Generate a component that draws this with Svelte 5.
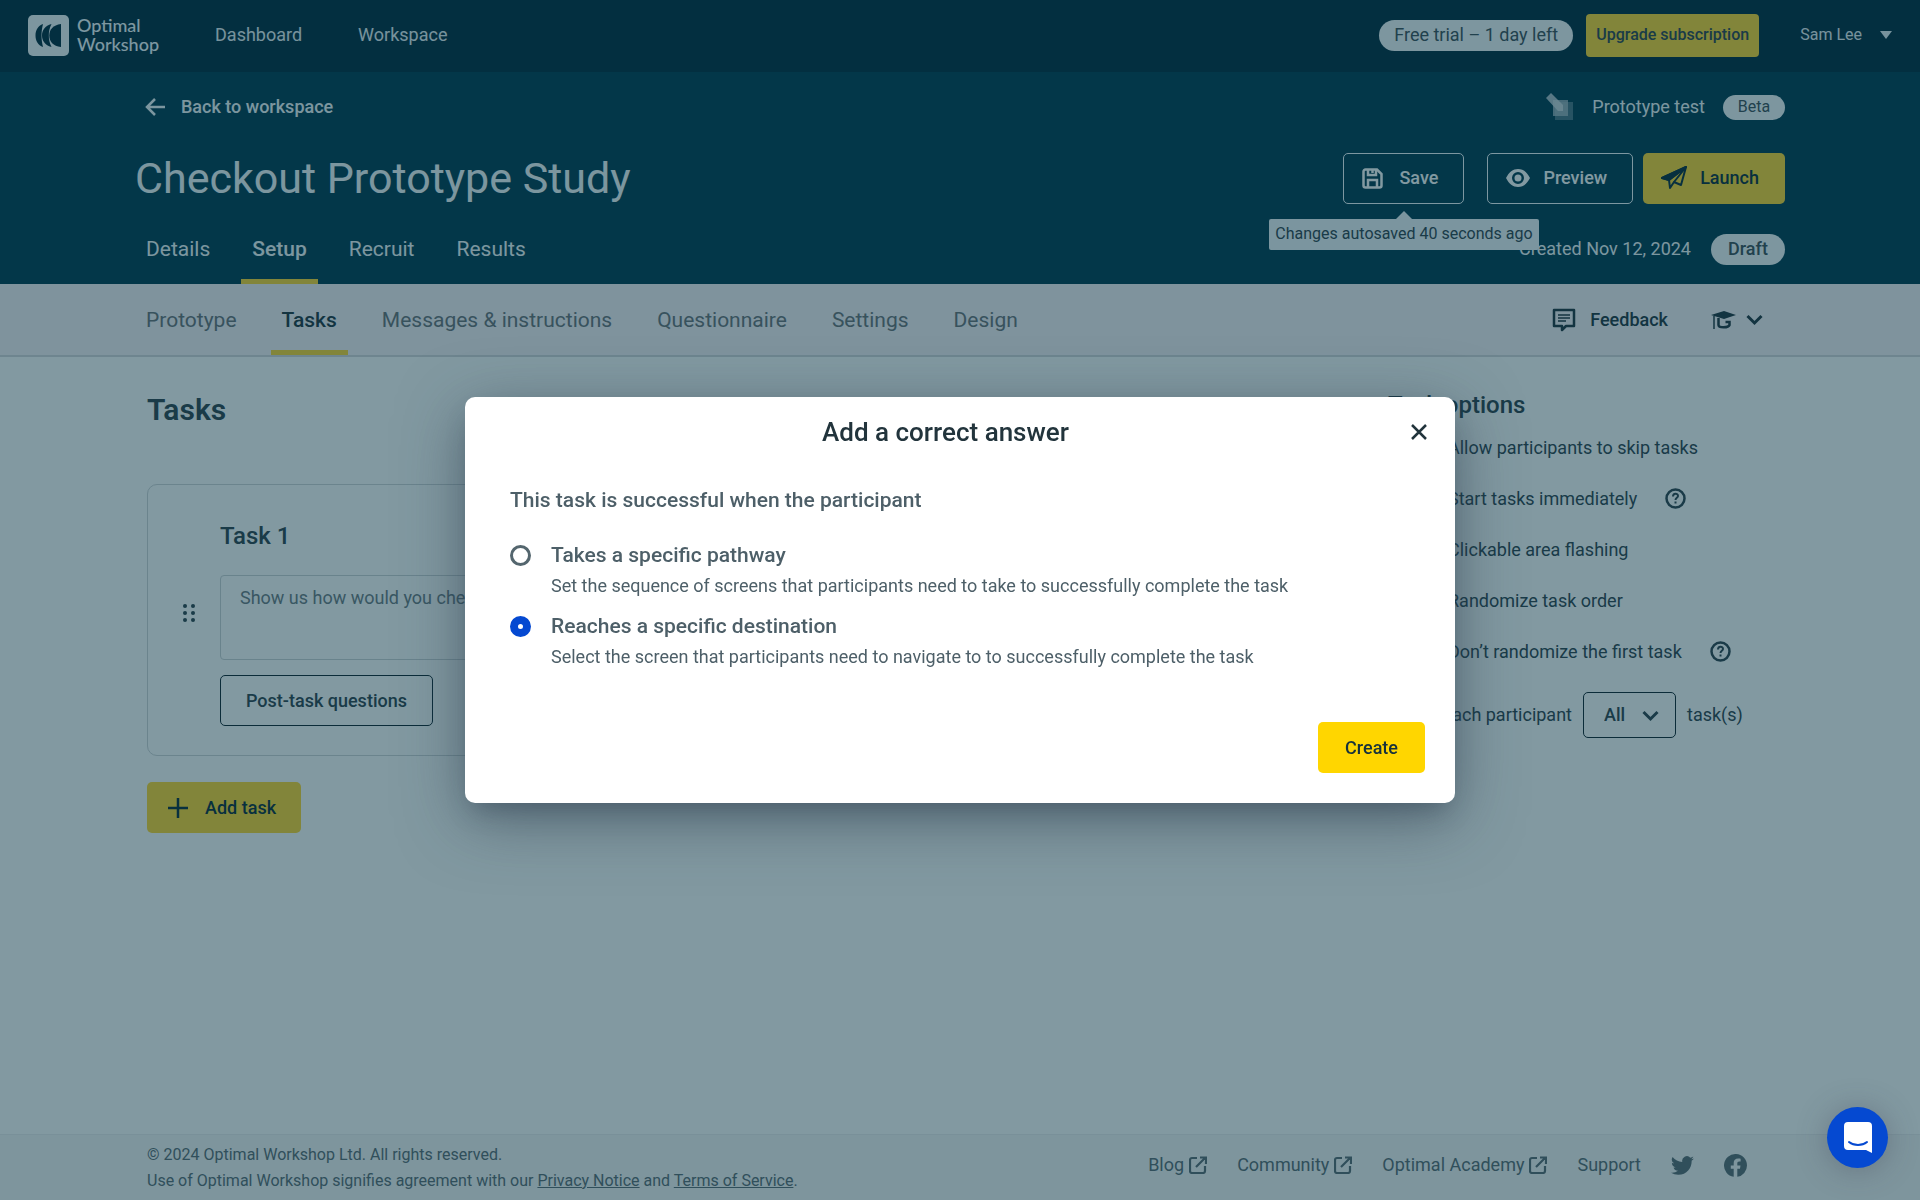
<script>
  const studyTabs = ['Details', 'Setup', 'Recruit', 'Results'];
  const setupTabs = ['Prototype', 'Tasks', 'Messages & instructions', 'Questionnaire', 'Settings', 'Design'];
  const options = [
    { label: 'Allow participants to skip tasks' },
    { label: 'Start tasks immediately', help: true },
    { label: 'Clickable area flashing' },
    { label: 'Randomize task order' },
    { label: 'Don’t randomize the first task', help: true },
  ];
  const answers = [
    { id: 'pathway', label: 'Takes a specific pathway', text: 'Set the sequence of screens that participants need to take to successfully complete the task' },
    { id: 'destination', label: 'Reaches a specific destination', text: 'Select the screen that participants need to navigate to to successfully complete the task' },
  ];
  const footerLinks = ['Blog', 'Community', 'Optimal Academy'];
  let answer = $state('destination');
  let amount = $state('All');
</script>

{#snippet chevron()}
  <svg class="chevron" width="17" height="12" viewBox="0 0 17 12" aria-hidden="true"><path d="M1.500 2l7 7 7-7" fill="none" stroke="currentColor" stroke-width="3" /></svg>
{/snippet}

<div class="page">
  <header class="topbar">
    <a class="logo" href="#home">
      <svg width="41" height="41" viewBox="0 0 41 41" aria-hidden="true">
        <rect width="41" height="41" rx="5" fill="#f4f8fa" />
        <g class="blades">
          <path d="M15 9C10 11 7.500 15 7.500 20.500S10 30 15 32c-1-4-1.500-7.500-1.500-11.500S14 13 15 9z" />
          <path d="M23.500 9c-6.500 2-9.500 6-9.500 11.500s3 9.500 9.500 11.500c-2-4-2.700-7.500-2.700-11.500S21.500 13 23.500 9z" />
          <path d="M33 9C25 10 21.300 14.500 21.300 20.500S25 31 33 32z" />
        </g>
      </svg>
      <span>Optimal<br />Workshop</span>
    </a>
    <nav class="mainnav" aria-label="Main">
      <a href="#dashboard">Dashboard</a>
      <a href="#workspace">Workspace</a>
    </nav>
    <span class="pill trial">Free trial – 1 day left</span>
    <button class="upgrade">Upgrade subscription</button>
    <button class="user">Sam Lee <svg width="12" height="8" viewBox="0 0 12 8" aria-hidden="true"><path d="M0 0h12L6 8z" fill="currentColor" /></svg></button>
  </header>

  <section class="study">
    <div class="row">
      <a class="back" href="#workspace">
        <svg width="20" height="18" viewBox="0 0 20 18" aria-hidden="true"><path d="M20 9H2M10 1L2 9l8 8" fill="none" stroke="currentColor" stroke-width="2.500" /></svg>
        Back to workspace
      </a>
      <div class="kind">
        <svg width="28" height="28" viewBox="0 0 28 28" aria-hidden="true">
          <path d="M9 9h18v18H9z" fill="#7a99a5" opacity=".6" />
          <path d="M7 7h15v16H7z" fill="#a8bcc4" opacity=".8" />
          <path d="M0 5l5-5 12 12v6h-5z" fill="#d4dfe4" opacity=".8" />
        </svg>
        <span>Prototype test</span>
        <span class="pill beta">Beta</span>
      </div>
    </div>
    <div class="row title-row">
      <h1>Checkout Prototype Study</h1>
      <div class="actions">
        <div class="save">
          <button class="btn ghost">
            <svg width="21" height="21" viewBox="0 0 21 21" fill="none" stroke="currentColor" stroke-width="2.500" aria-hidden="true"><path d="M1.500 3.500a2 2 0 0 1 2-2H15l4.500 4.500v11.500a2 2 0 0 1-2 2h-14a2 2 0 0 1-2-2z" /><path d="M6 1.500V7h8V1.500M6 19.500V12h9v7.500M10.500 2v3" /></svg>
            Save
          </button>
          <div class="tooltip" role="status">Changes autosaved 40 seconds ago</div>
        </div>
        <button class="btn ghost">
          <svg width="24" height="18" viewBox="0 0 24 18" fill="currentColor" fill-rule="evenodd" aria-hidden="true"><path d="M0 9C3 3 7 0 12 0s9 3 12 9c-3 6-7 9-12 9S3 15 0 9zm6 0a6 6 0 1 0 12 0A6 6 0 0 0 6 9z" /><circle cx="12" cy="9" r="3.500" /></svg>
          Preview
        </button>
        <button class="btn yellow">
          <svg width="26" height="24" viewBox="0 0 26 24" fill="none" stroke="currentColor" stroke-width="2" stroke-linejoin="round" aria-hidden="true"><path d="M25 1L20 19l-7-3-4 6-1-8-7-2z" /><path d="M25 1L8 14M25 1L13 16" /><path d="M1 12L25 1 8 14z" fill="currentColor" /></svg>
          Launch
        </button>
      </div>
    </div>
    <div class="row">
      <nav class="tabs" aria-label="Study">
        {#each studyTabs as tab}
          <a href="#{tab}" class:active={tab === 'Setup'}>{tab}</a>
        {/each}
      </nav>
      <div class="created">Created Nov 12, 2024 <span class="pill draft">Draft</span></div>
    </div>
  </section>

  <div class="subnav">
    <nav class="tabs" aria-label="Setup">
      {#each setupTabs as tab}
        <a href="#{tab}" class:active={tab === 'Tasks'}>{tab}</a>
      {/each}
    </nav>
    <div class="tools">
      <button class="plain feedback">
        <svg width="24" height="24" viewBox="0 0 24 24" fill="none" stroke="currentColor" aria-hidden="true"><path d="M2 2h20v16h-8l-4 4v-4H2z" stroke-width="2.500" stroke-linejoin="round" /><path d="M6 7h12M6 10h12M6 13h8" stroke-width="1.500" /></svg>
        Feedback
      </button>
      <button class="plain learn" aria-label="Learning resources">
        <svg width="25" height="20" viewBox="0 0 25 20" fill="none" stroke="currentColor" aria-hidden="true"><path d="M0 5l13-4 12 4-12 4z" fill="currentColor" stroke="none" /><path d="M7.500 8v7c0 3 10 3 11 0v-3h-4" stroke-width="2.500" /><path d="M3 6v13" stroke-width="1.500" /></svg>
        {@render chevron()}
      </button>
    </div>
  </div>

  <main>
    <section class="tasks">
      <h2>Tasks</h2>
      <article class="card">
        <h3>Task 1</h3>
        <button class="plain handle" aria-label="Reorder task">
          <svg width="12" height="18" viewBox="0 0 12 18" fill="currentColor" aria-hidden="true"><circle cx="2" cy="2" r="2" /><circle cx="10" cy="2" r="2" /><circle cx="2" cy="9" r="2" /><circle cx="10" cy="9" r="2" /><circle cx="2" cy="16" r="2" /><circle cx="10" cy="16" r="2" /></svg>
        </button>
        <textarea aria-label="Task 1 instructions">Show us how would you check out</textarea>
        <button class="btn outline">Post-task questions</button>
      </article>
      <button class="btn yellow add">
        <svg width="20" height="20" viewBox="0 0 20 20" aria-hidden="true"><path d="M10 0v20M0 10h20" stroke="currentColor" stroke-width="2.500" /></svg>
        Add task
      </button>
    </section>

    <aside>
      <h3>Task options</h3>
      {#each options as option}
        <div class="option">
          <label><input type="checkbox" />{option.label}</label>
          {#if option.help}
            <button class="plain" aria-label="About this option">
              <svg width="21" height="21" viewBox="0 0 21 21" fill="none" stroke="currentColor" aria-hidden="true"><circle cx="10.500" cy="10.500" r="9" stroke-width="2.500" /><path d="M8 8.500c0-3.500 5-3.500 5-.5 0 1.800-2.500 1.800-2.500 4" stroke-width="2" /><path d="M10.500 13.500v2" stroke-width="2" /></svg>
            </button>
          {/if}
        </div>
      {/each}
      <div class="amount">
        <label for="amount">Give each participant</label>
        <span class="select">
          <select id="amount" bind:value={amount}><option>All</option><option>1</option></select>
          {@render chevron()}
        </span>
        <span>task(s)</span>
      </div>
    </aside>
  </main>

  <footer>
    <p>© 2024 Optimal Workshop Ltd. All rights reserved.<br />Use of Optimal Workshop signifies agreement with our <a href="#privacy">Privacy Notice</a> and <a href="#terms">Terms of Service</a>.</p>
    <nav aria-label="Footer">
      {#each footerLinks as link}
        <a href="#{link}">{link}
          <svg width="18" height="18" viewBox="0 0 18 18" fill="none" stroke="currentColor" stroke-width="2.200" aria-hidden="true"><path d="M8 2H3a2 2 0 0 0-2 2v11a2 2 0 0 0 2 2h11a2 2 0 0 0 2-2v-5M11 1.500h6V8M16.500 1.500L7 11" /></svg>
        </a>
      {/each}
      <a href="#support">Support</a>
      <a href="#twitter" aria-label="Twitter"><svg width="23" height="23" viewBox="0 0 24 24" fill="currentColor" aria-hidden="true"><path d="M23.950 4.600a10 10 0 0 1-2.820.77 4.950 4.950 0 0 0 2.160-2.720c-.95.560-2 .96-3.130 1.190a4.920 4.920 0 0 0-8.380 4.480A13.900 13.900 0 0 1 1.640 3.160a4.920 4.920 0 0 0 1.520 6.570 4.900 4.900 0 0 1-2.230-.61v.06a4.920 4.920 0 0 0 3.950 4.830 5 5 0 0 1-2.210.08 4.940 4.940 0 0 0 4.600 3.420A9.870 9.870 0 0 1 0 19.540a14 14 0 0 0 7.550 2.210c9.050 0 14-7.500 14-13.980l-.02-.63a10 10 0 0 0 2.420-2.540z" /></svg></a>
      <a href="#facebook" aria-label="Facebook"><svg width="23" height="23" viewBox="0 0 24 24" fill="currentColor" aria-hidden="true"><path d="M24 12a12 12 0 1 0-13.880 11.850v-8.380H7.080V12h3.040V9.360c0-3 1.800-4.670 4.540-4.670 1.310 0 2.680.24 2.680.24v2.950h-1.500c-1.500 0-1.960.93-1.960 1.880V12h3.330l-.53 3.470h-2.800v8.380A12 12 0 0 0 24 12z" /></svg></a>
    </nav>
  </footer>
</div>

<div class="overlay">
  <div class="dialog" role="dialog" aria-modal="true" aria-labelledby="dialog-title">
    <div class="dialog-head">
      <h2 id="dialog-title">Add a correct answer</h2>
      <button class="plain" aria-label="Close"><svg width="16" height="16" viewBox="0 0 16 16" aria-hidden="true"><path d="M1 1l14 14M15 1L1 15" stroke="currentColor" stroke-width="2.500" /></svg></button>
    </div>
    <fieldset>
      <legend>This task is successful when the participant</legend>
      {#each answers as item}
        <div class="answer">
          <input type="radio" name="answer" id={item.id} value={item.id} bind:group={answer} />
          <label for={item.id}>{item.label}</label>
          <p>{item.text}</p>
        </div>
      {/each}
    </fieldset>
    <button class="btn create">Create</button>
  </div>
</div>

<button class="chat" aria-label="Open chat">
  <svg width="28" height="31" viewBox="0 0 28 31" aria-hidden="true"><path d="M4 0h20a4 4 0 0 1 4 4v27l-6-3H4a4 4 0 0 1-4-4V4a4 4 0 0 1 4-4z" fill="#fff" /><path d="M5 20c5 4 13 4 18 0" fill="none" stroke="#0549d1" stroke-width="2" stroke-linecap="round" /></svg>
</button>

<style>
  :global(body) { margin: 0; font-family: Roboto, "Liberation Sans", sans-serif; font-size: 18px; line-height: 24px; color: #2e424c; }
  * { box-sizing: border-box; }
  svg { display: block; flex: none; }
  h1, h2, h3, p { margin: 0; }
  a { color: inherit; text-decoration: none; }
  button, select, textarea { font: inherit; color: inherit; cursor: pointer; }
  .page { min-height: 100vh; display: flex; flex-direction: column; white-space: nowrap; }
  .plain { display: flex; align-items: center; border: 0; padding: 0; background: none; }

  .topbar { display: flex; align-items: center; height: 72px; padding: 0 28px 2px; background: #002a3d; color: #e8f1f5; }
  .logo { display: flex; align-items: center; gap: 8px; margin-right: 56px; font: 500 18px/19px Lato, sans-serif; color: #f4fbff; }
  .blades { fill: #002a3d; }
  .mainnav { display: flex; gap: 56px; margin-right: auto; }
  .pill { display: inline-flex; align-items: center; justify-content: center; border-radius: 16px; background: #f4f8fa; color: #3c4e57; }
  .trial { height: 31px; width: 194px; margin-right: 13px; }
  .upgrade { height: 43px; width: 173px; padding: 0; margin-right: 41px; border: 0; border-radius: 4px; background: #ffd630; color: #2e424c; font-size: 16px; font-weight: 500; }
  .user { display: flex; align-items: center; gap: 18px; border: 0; padding: 0; background: none; font-size: 16px; }

  .study { padding: 0 135px; background: #003a4f; color: #f2f8fb; }
  .row { display: flex; justify-content: space-between; align-items: center; height: 70px; }
  .title-row { height: 72px; }
  .back { display: flex; align-items: center; gap: 16px; margin-left: 10px; font-weight: 500; }
  .kind { display: flex; align-items: center; gap: 18px; }
  .beta { height: 25px; width: 62px; font-size: 16px; }
  h1 { font-size: 43px; line-height: 48px; font-weight: 400; }
  .actions { display: flex; }
  .btn { display: inline-flex; align-items: center; gap: 13px; height: 51px; border: 0; border-radius: 5px; font-weight: 500; }
  .ghost { padding: 0 25px 0 18px; border: 1px solid #f4fbff; background: none; color: #fff; }
  .yellow { padding: 0 26px 0 18px; margin-left: 10px; background: #ffd630; color: #0a2c3a; }
  .save { position: relative; margin-right: 23px; }
  .save .ghost { gap: 16px; }
  .tooltip { position: absolute; top: 66px; left: 50%; width: 270px; margin-left: -135px; padding: 3px 0 4px; border-radius: 2px; text-align: center; background: #f0f7fa; color: #2e424c; font-size: 16px; }
  .tooltip::before { content: ""; position: absolute; left: 127px; top: -8px; border: 8px solid transparent; border-top: 0; border-bottom-color: #f0f7fa; }
  .tabs { display: flex; gap: 20px; align-self: stretch; }
  .tabs a { display: flex; align-items: center; padding: 5px 11px 0; border-bottom: 5px solid transparent; font-size: 21px; }
  .tabs .active { border-color: #ffd630; font-weight: 500; }
  .created { display: flex; align-items: center; gap: 20px; }
  .draft { height: 31px; width: 74px; font-weight: 500; }

  .subnav { display: flex; justify-content: space-between; align-items: center; height: 73px; padding: 0 157px 0 135px; background: #f8f2f6; border-bottom: 2px solid #d6d6da; }
  .subnav .tabs { gap: 23px; color: #6a7177; }
  .subnav .tabs .active { color: #20343e; }
  .tools { display: flex; align-items: center; gap: 43px; color: #20343e; }
  .feedback { gap: 14px; font-weight: 500; }
  .learn { gap: 10px; }

  main { flex: 1; display: grid; grid-template-columns: 1fr 405px; gap: 30px; align-items: start; padding: 0 135px 60px 147px; background: #fefefe; }
  .tasks h2 { margin: 35px 0 56px; font-size: 30px; line-height: 36px; font-weight: 600; }
  h3 { font-size: 24px; line-height: 32px; font-weight: 500; }
  .card { display: grid; grid-template-columns: 71px 1fr; padding: 35px 30px 29px 1px; border: 1px solid #d0d4d7; border-radius: 10px; }
  .card h3 { grid-column: 2; margin-bottom: 23px; }
  .handle { margin: 0 0 10px 34px; }
  textarea { height: 85px; resize: none; padding: 10px 19px; border: 1px solid #cdd2d5; border-radius: 4px; background: none; color: #6d7a82; }
  .outline { grid-column: 2; justify-self: start; margin-top: 15px; padding: 0 25px; border: 1px solid #10242e; background: none; }
  .add { margin: 26px 0 0; padding: 0 25px 0 21px; gap: 17px; }

  aside h3 { margin: 32px 0 1px 8px; }
  .option { display: flex; align-items: center; gap: 28px; height: 51px; }
  .option label { display: flex; align-items: center; gap: 24px; }
  .option input { width: 44px; height: 20px; margin: 0; }
  .amount { display: flex; align-items: center; gap: 11px; margin-top: 15px; }
  .amount label { width: 192px; text-align: right; }
  .select { position: relative; }
  .select select { display: block; appearance: none; width: 93px; height: 46px; padding: 0 20px; border: 1px solid #10242e; border-radius: 5px; background: none; font-weight: 500; }
  .select .chevron { position: absolute; right: 17px; top: 18px; pointer-events: none; }

  footer { display: flex; justify-content: space-between; height: 66px; padding: 7px 173px 0 147px; border-top: 1px solid #ececee; background: #f6f6f6; color: #5b6b73; }
  footer p { font-size: 16px; line-height: 26px; }
  footer p a { text-decoration: underline; }
  footer nav { display: flex; align-items: center; gap: 30px; height: 46px; }
  footer nav a { display: flex; align-items: center; gap: 5px; }

  .overlay { position: fixed; inset: 0; display: flex; align-items: center; justify-content: center; background: rgba(6, 52, 68, 0.5); }
  .dialog { display: flex; flex-direction: column; width: 990px; max-width: 95%; padding: 19px 30px 30px 45px; border-radius: 10px; background: #fff; color: #4d5f68; box-shadow: 0 16px 64px rgba(44, 60, 76, 0.55), 0 14px 24px -8px rgba(44, 60, 76, 0.35); }
  .dialog-head { display: flex; align-items: center; margin: 0 -2px 0 -30px; color: #22343c; }
  .dialog-head h2 { flex: 1; text-align: center; font-size: 26px; line-height: 32px; font-weight: 500; }
  fieldset { border: 0; margin: 40px 0 0; padding: 0; }
  legend { padding: 0; margin: 0 0 26px; font-size: 21px; font-weight: 500; }
  .answer { display: grid; grid-template-columns: 21px 1fr; column-gap: 20px; align-items: center; margin-bottom: 9px; }
  .answer label { font-size: 21px; line-height: 34px; font-weight: 500; }
  .answer p { grid-column: 2; line-height: 28px; }
  .answer input { appearance: none; width: 21px; height: 21px; margin: 0; border: 3px solid #54666e; border-radius: 50%; }
  .answer input:checked { border: 8px solid #0549d1; }
  .create { align-self: flex-end; margin-top: 42px; padding: 0 27px; background: #ffd600; color: #16313c; }
  .chat { position: fixed; right: 32px; bottom: 32px; display: flex; align-items: center; justify-content: center; width: 61px; height: 61px; padding: 0; border: 0; border-radius: 50%; background: #0549d1; box-shadow: 0 2px 30px rgba(60, 60, 80, 0.35); }
</style>
